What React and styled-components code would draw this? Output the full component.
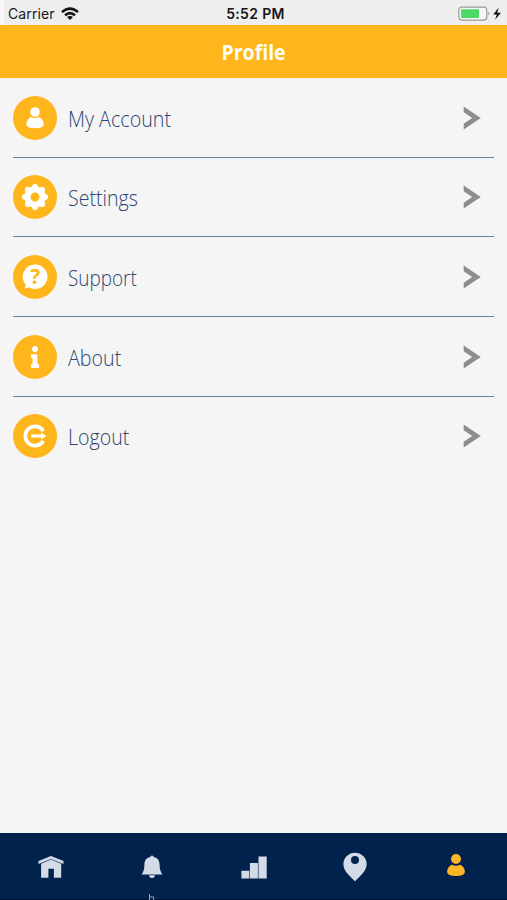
import styled, { createGlobalStyle } from 'styled-components';
import { FaInfo } from 'react-icons/fa';

const GlobalStyle = createGlobalStyle`
	* {
		box-sizing: border-box;
	}
	body {
		margin: 0;
		background: #f5f5f5;
	}
`;

const Screen = styled.div`
	display: flex;
	flex-direction: column;
	width: 507px;
	height: 900px;
	overflow: hidden;
	background: #f5f5f5;
	font-family: 'Open Sans', 'Noto Sans', sans-serif;
`;

const StatusBar = styled.div`
	display: grid;
	grid-template-columns: 1fr auto 1fr;
	align-items: center;
	height: 25px;
	padding: 2px 5px 0 8px;
	background: #eeeeee;
	box-shadow: inset 4px 0 0 #f9f9f9;
	color: #161616;
	font-family: Inter, 'Liberation Sans', sans-serif;
	font-size: 14px;
`;

const Carrier = styled.div`
	display: flex;
	align-items: center;
	gap: 6px;
	letter-spacing: 0.1px;
`;

const Time = styled.div`
	padding-left: 1px;
	font-weight: 600;
	letter-spacing: 0.35px;
`;

const Power = styled.div`
	display: flex;
	justify-content: flex-end;
`;

const Header = styled.header`
	display: flex;
	align-items: center;
	justify-content: center;
	flex: none;
	height: 53px;
	padding-top: 1px;
	background: #ffb61c;
`;

const Title = styled.h1`
	margin: 0;
	color: #fffdf5;
	font-size: 21px;
	font-weight: 700;
	transform: scaleX(0.93);
`;

const Menu = styled.ul`
	flex: 1;
	margin: 0;
	padding: 0 13px;
	list-style: none;
`;

const MenuItem = styled.li`
	display: flex;
	align-items: center;
	height: 79.65px;
	padding: 0.6px 13px 0 0;
	border-bottom: 1.5px solid ${({ $last }) => ($last ? 'transparent' : '#67839f')};
`;

const Badge = styled.span`
	display: flex;
	align-items: center;
	justify-content: center;
	width: 44px;
	height: 44px;
	border-radius: 50%;
	background: #ffb61c;
	color: #fff;
`;

const Label = styled.span`
	margin-left: 11px;
	padding-top: 1px;
	color: #2b4672;
	font-size: 21.5px;
	font-weight: 340;
	transform: scaleX(${({ $stretch }) => $stretch});
	transform-origin: left;
`;

const Arrow = styled.span`
	display: flex;
	margin-left: auto;
`;

const TabBar = styled.nav`
	display: grid;
	grid-template-columns: repeat(5, 1fr);
	flex: none;
	height: 67px;
	padding-top: 2px;
	background: #00224d;
	border-bottom: 1px solid #001633;
`;

const Tab = styled.div`
	position: relative;
	display: flex;
	align-items: center;
	justify-content: center;
	padding-bottom: ${({ $active }) => ($active ? '4px' : 0)};
	color: ${({ $active }) => ($active ? '#fdb528' : '#d3dce6')};
`;

const Pointer = styled.svg`
	position: absolute;
	left: 47px;
	bottom: -1px;
`;

const Wifi = () => (
	<svg width="18" height="13" viewBox="0 0 18 13" fill="none" stroke="#111" strokeWidth="2.5">
		<path d="M1 5.1Q9-1.8 17 5.1" />
		<path d="M4 8.3Q9 4 14 8.3" />
		<path d="M9 13 6 10.1Q9 7.7 12 10.1Z" fill="#111" stroke="none" />
	</svg>
);

const Battery = () => (
	<svg width="44" height="16" viewBox="0 0 44 16">
		<rect x=".8" y="1.1" width="28" height="13" rx="3" fill="#f7f7f7" stroke="#9b9b9b" strokeWidth="1.2" />
		<rect x="3" y="3.3" width="18" height="8.6" rx=".7" fill="#4cd964" />
		<path d="M30.2 5.6q2 2 0 4z" fill="#9b9b9b" />
		<path d="m40.7 1.6-5.4 6.8h3.5l-1.7 5.4 5.8-7h-3.7z" fill="#111" />
	</svg>
);

const Person = () => (
	<svg width="44" height="44" viewBox="0 0 44 44" fill="currentColor">
		<circle cx="22" cy="16" r="4.8" />
		<path d="M18 21.1Q22 23.2 26 21.1Q30.5 23.2 30.7 28.5Q30.5 32.2 22 32.2T13.3 28.5Q13.5 23.2 18 21.1Z" />
	</svg>
);

const teeth = [0, 45, 90, 135, 180, 225, 270, 315];

const Gear = () => (
	<svg width="44" height="44" viewBox="0 0 44 44">
		<circle cx="22" cy="22" r="7.6" fill="none" stroke="currentColor" strokeWidth="6.2" />
		{teeth.map((angle) => (
			<path
				key={angle}
				d="M17.9 14 19.8 9.8Q22 7.9 24.2 9.8L26.1 14Z"
				fill="currentColor"
				transform={`rotate(${angle} 22 22)`}
			/>
		))}
	</svg>
);

const QuestionText = styled.text`
	fill: #ffb61c;
	font-family: 'Open Sans', sans-serif;
	font-size: 21px;
	font-weight: 700;
	text-anchor: middle;
`;

const Question = () => (
	<svg width="44" height="44" viewBox="0 0 44 44">
		<path
			d="M22 9.6a12.2 12.2 0 1 1-5.9 22.7Q14.2 33.7 11.3 33.3Q13.2 31.8 12.6 29.6A12.2 12.2 0 0 1 22 9.6Z"
			fill="currentColor"
		/>
		<QuestionText x="22.2" y="29.4">?</QuestionText>
	</svg>
);

const Exit = () => (
	<svg width="44" height="44" viewBox="0 0 44 44" fill="none" stroke="currentColor">
		<path d="M30.3 17A9.7 9.7 0 1 0 30.3 27" strokeWidth="3.7" />
		<path d="M18.3 22H29" strokeWidth="3.1" />
		<path d="m28.2 18.6 4.9 3.4-4.9 3.4z" fill="currentColor" stroke="none" />
	</svg>
);

const Chevron = () => (
	<svg width="18" height="24" viewBox="0 0 18 24">
		<path d="M.7.4 17.8 12 .7 23.6V17.8L9.2 12 .7 6.2Z" fill="#8d8d8d" />
	</svg>
);

const Home = () => (
	<svg width="26" height="24" viewBox="0 0 26 24" fill="currentColor">
		<path d="M13 .9 25.5 6v2.9L13 3.9.5 8.9V6Z" />
		<path d="m13 4.6 10.2 4.1v14H15.9v-9h-5.5v9H3.1v-14Z" />
	</svg>
);

const Bell = () => (
	<svg width="22" height="24" viewBox="0 0 22 24" fill="currentColor">
		<path d="M11 .6q1.4 0 1.7 1.5c4.4.9 5.8 4 5.9 7.6.1 4.5.8 7 2.9 9.7H.5c2.1-2.7 2.8-5.2 2.9-9.7C3.5 6.1 4.9 3 9.3 2.1Q9.6.6 11 .6Z" />
		<path d="M8 20.3h6q-.5 2.8-3 2.8t-3-2.8Z" />
	</svg>
);

const Bars = () => (
	<svg width="27" height="23" viewBox="0 0 27 23" fill="currentColor">
		<path d="M1.4 14.8h7.9v7.6H1.4zM9.9 7h8v15.4h-8zM18.5.6h8.2v21.8h-8.2z" />
	</svg>
);

const Pin = () => (
	<svg width="24" height="30" viewBox="0 0 24 30">
		<path
			d="M12 .7A11.6 11.6 0 0 1 23.6 12.3C23.6 19.3 17.3 23.8 12 29.3C6.7 23.8.4 19.3.4 12.3A11.6 11.6 0 0 1 12 .7Zm0 3.2a4 4 0 1 0 0 8 4 4 0 1 0 0-8Z"
			fill="currentColor"
			fillRule="evenodd"
		/>
	</svg>
);

const Profile = () => (
	<svg width="20" height="26" viewBox="0 0 20 26" fill="currentColor">
		<circle cx="10" cy="7" r="5" />
		<path d="M5.7 12.7Q10 14.6 14.3 12.7Q18.8 15 18.9 20Q18.7 24 10 24T1.1 20Q1.2 15 5.7 12.7Z" />
	</svg>
);

const items = [
	{ label: 'My Account', icon: <Person />, stretch: 0.915 },
	{ label: 'Settings', icon: <Gear />, stretch: 0.91 },
	{ label: 'Support', icon: <Question />, stretch: 0.88 },
	{ label: 'About', icon: <FaInfo size={22} />, stretch: 0.915 },
	{ label: 'Logout', icon: <Exit />, stretch: 0.91 },
];

const App = () => {
	return (
		<Screen>
			<GlobalStyle />
			<StatusBar>
				<Carrier>
					Carrier <Wifi />
				</Carrier>
				<Time>5:52 PM</Time>
				<Power>
					<Battery />
				</Power>
			</StatusBar>
			<Header>
				<Title>Profile</Title>
			</Header>
			<Menu>
				{items.map(({ label, icon, stretch }, i) => (
					<MenuItem key={label} $last={i === items.length - 1}>
						<Badge>{icon}</Badge>
						<Label $stretch={stretch}>{label}</Label>
						<Arrow>
							<Chevron />
						</Arrow>
					</MenuItem>
				))}
			</Menu>
			<TabBar>
				<Tab>
					<Home />
				</Tab>
				<Tab>
					<Bell />
					<Pointer width="8" height="6" viewBox="0 0 8 6" fill="none" stroke="#8fa2b9">
						<path d="M1.5 0v6M1.5 3h4.2v3" />
					</Pointer>
				</Tab>
				<Tab>
					<Bars />
				</Tab>
				<Tab>
					<Pin />
				</Tab>
				<Tab $active>
					<Profile />
				</Tab>
			</TabBar>
		</Screen>
	);
};

export default App;
